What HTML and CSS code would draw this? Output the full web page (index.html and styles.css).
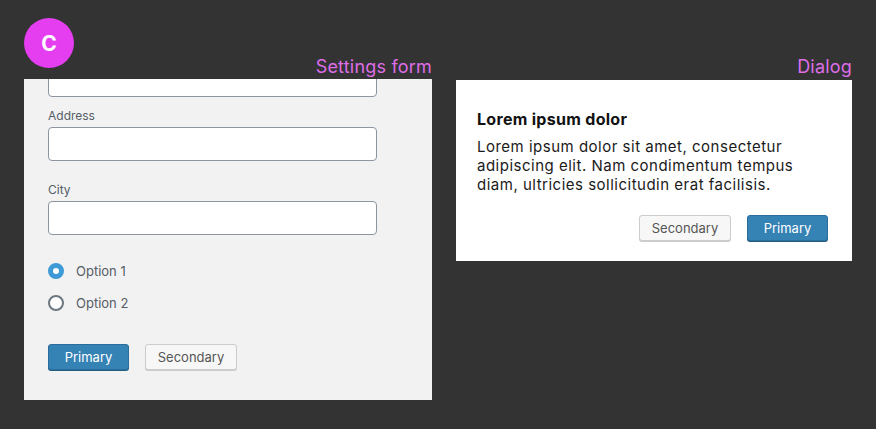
FILE: index.html
```html
<!DOCTYPE html>
<html lang="en">
<head>
<meta charset="utf-8">
<title>Settings form and Dialog</title>
<link rel="stylesheet" href="styles.css">
</head>
<body>
<div class="badge">C</div>
<main class="board">
  <section class="frame frame-form">
    <h2 class="frame-label">Settings form</h2>
    <div class="panel form-panel">
      <div class="field field-first">
        <input class="text-input" type="text" aria-label="Name">
      </div>
      <div class="field field-address">
        <label class="field-label">Address</label>
        <input class="text-input" type="text">
      </div>
      <div class="field field-city">
        <label class="field-label">City</label>
        <input class="text-input" type="text">
      </div>
      <div class="radios">
        <label class="radio-row"><span class="radio radio-checked"></span><span class="radio-text">Option 1</span></label>
        <label class="radio-row"><span class="radio"></span><span class="radio-text">Option 2</span></label>
      </div>
      <div class="actions">
        <button class="btn btn-primary" type="button">Primary</button>
        <button class="btn btn-secondary" type="button">Secondary</button>
      </div>
    </div>
  </section>
  <section class="frame frame-dialog">
    <h2 class="frame-label frame-label-dialog">Dialog</h2>
    <div class="panel dialog-panel">
      <h3 class="dialog-title">Lorem ipsum dolor</h3>
      <p class="dialog-text">Lorem ipsum dolor sit amet, consectetur adipiscing elit. Nam condimentum tempus diam, ultricies sollicitudin erat facilisis.</p>
      <div class="dialog-actions">
        <button class="btn btn-secondary" type="button">Secondary</button>
        <button class="btn btn-primary" type="button">Primary</button>
      </div>
    </div>
  </section>
</main>
</body>
</html>
```
FILE: styles.css
```css
* { box-sizing: border-box; }
html, body { margin: 0; padding: 0; }
body {
  background: #333333;
  width: 876px;
  height: 429px;
  overflow: hidden;
  font-family: Inter, "Noto Sans", "Liberation Sans", sans-serif;
  position: relative;
}
.badge {
  position: absolute;
  left: 24px;
  top: 18px;
  width: 50px;
  height: 50px;
  border-radius: 50%;
  background: #e53ef0;
  color: #ffffff;
  font-weight: 700;
  font-size: 21px;
  display: flex;
  align-items: center;
  justify-content: center;
}
.board {
  display: flex;
  align-items: flex-start;
  gap: 24px;
  padding: 55px 0 0 24px;
}
.frame { display: flex; flex-direction: column; }
.frame-form { width: 408px; }
.frame-dialog { width: 396px; }
.frame-label {
  margin: 0;
  text-align: right;
  font-size: 18px;
  line-height: 24px;
  font-weight: 400;
  letter-spacing: 0.2px;
  color: #df6de8;
}
.frame-label-dialog { margin-bottom: 1px; }
.panel { overflow: hidden; }
.form-panel {
  background: #f2f2f2;
  padding: 0 55px 29px 24px;
  height: 321px;
}
.field { display: flex; flex-direction: column; }
.field-first { margin-top: -16px; }
.field-address { margin-top: 11px; }
.field-city { margin-top: 21px; }
.field-label {
  font-size: 12px;
  line-height: 16px;
  color: #555d66;
  margin-bottom: 3px;
}
.text-input {
  display: block;
  width: 329px;
  height: 34px;
  margin: 0;
  border: 1px solid #8d96a0;
  border-radius: 4px;
  background: #ffffff;
  font: inherit;
}
.radios {
  display: flex;
  flex-direction: column;
  gap: 12px;
  margin-top: 26px;
}
.radio-row {
  display: flex;
  align-items: center;
  gap: 12px;
  height: 20px;
}
.radio {
  width: 16px;
  height: 16px;
  border-radius: 50%;
  border: 2px solid #6c7781;
  background: #ffffff;
  flex: none;
}
.radio-checked {
  border: 5px solid #3d9ad6;
  background: #ffffff;
}
.radio-text {
  font-size: 13px;
  color: #555d66;
}
.actions {
  display: flex;
  gap: 16px;
  margin-top: 31px;
}
.btn {
  height: 26px;
  padding: 0 12px;
  border-radius: 3px;
  font-family: inherit;
  font-size: 13px;
  line-height: 24px;
  margin: 0;
}
.btn-primary {
  width: 81px;
  padding: 0;
  background: #3582b5;
  border: 1px solid #2b6e9b;
  box-shadow: 0 1px 0 #245d83;
  color: #ffffff;
}
.btn-secondary {
  width: 92px;
  padding: 0;
  background: #f7f7f7;
  border: 1px solid #cccccc;
  box-shadow: 0 1px 0 #cccccc;
  color: #555555;
}
.dialog-panel {
  background: #ffffff;
  padding: 30px 24px 19px 21px;
  height: 181px;
}
.dialog-title {
  margin: 0 0 8px;
  font-size: 16px;
  line-height: 19px;
  font-weight: 700;
  letter-spacing: 0.3px;
  color: #111111;
}
.dialog-text {
  margin: 0;
  max-width: 345px;
  font-size: 15px;
  line-height: 19px;
  letter-spacing: 0.5px;
  color: #1a1a1a;
}
.dialog-actions {
  display: flex;
  justify-content: flex-end;
  gap: 16px;
  margin-top: 21px;
}
```
